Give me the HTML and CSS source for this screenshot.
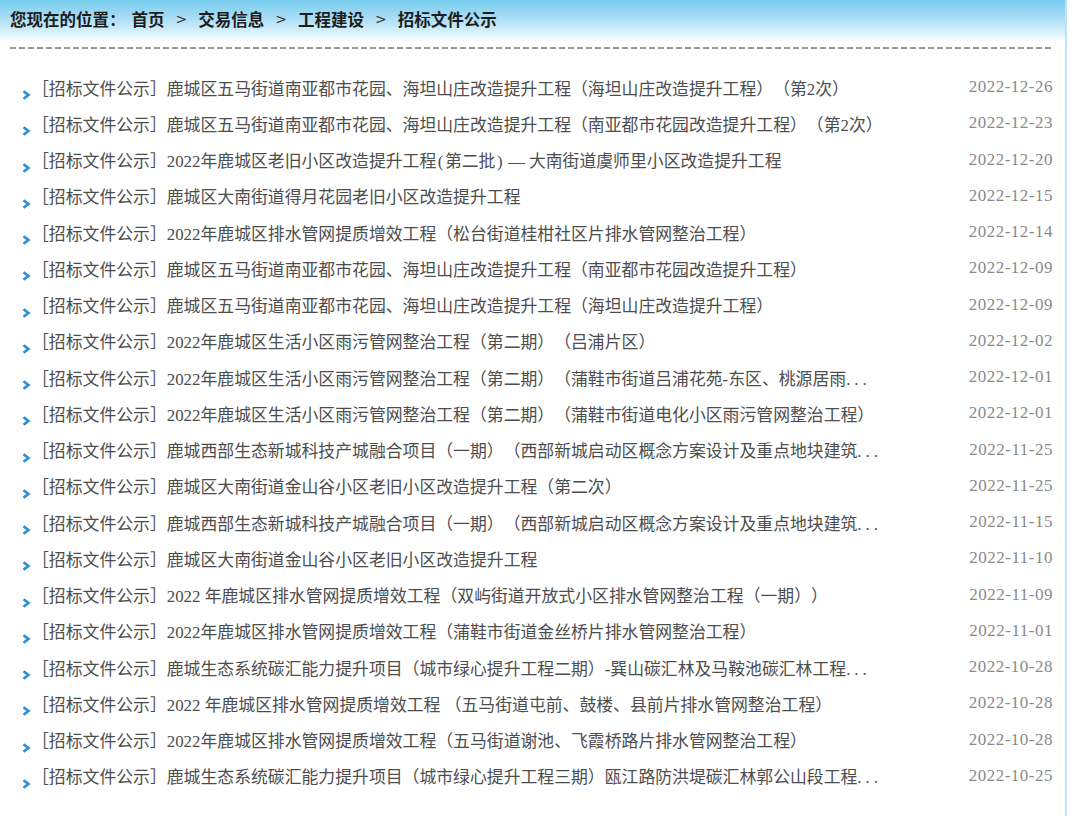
FILE: index.html
```html
<!DOCTYPE html>
<html lang="zh-CN">
<head>
<meta charset="utf-8">
<title>招标文件公示</title>
<link rel="stylesheet" href="styles.css">
</head>
<body>
<div class="page">
  <div class="wrap">
    <div class="crumb">
      <span class="lead">您现在的位置：</span><span>首页</span><span class="sep">&gt;</span><span>交易信息</span><span class="sep">&gt;</span><span>工程建设</span><span class="sep">&gt;</span><span>招标文件公示</span>
    </div>
    <div class="dash"></div>
    <ul class="list">
      <li><span class="title">［招标文件公示］鹿城区五马街道南亚都市花园、海坦山庄改造提升工程（海坦山庄改造提升工程）（第2次）</span><span class="date">2022-12-26</span></li>
      <li><span class="title">［招标文件公示］鹿城区五马街道南亚都市花园、海坦山庄改造提升工程（南亚都市花园改造提升工程）（第2次）</span><span class="date">2022-12-23</span></li>
      <li><span class="title">［招标文件公示］2022年鹿城区老旧小区改造提升工程<span class="hw">(</span>第二批<span class="hw">)</span><span class="dashc">—</span>大南街道虞师里小区改造提升工程</span><span class="date">2022-12-20</span></li>
      <li><span class="title">［招标文件公示］鹿城区大南街道得月花园老旧小区改造提升工程</span><span class="date">2022-12-15</span></li>
      <li><span class="title">［招标文件公示］2022年鹿城区排水管网提质增效工程（松台街道桂柑社区片排水管网整治工程）</span><span class="date">2022-12-14</span></li>
      <li><span class="title">［招标文件公示］鹿城区五马街道南亚都市花园、海坦山庄改造提升工程（南亚都市花园改造提升工程）</span><span class="date">2022-12-09</span></li>
      <li><span class="title">［招标文件公示］鹿城区五马街道南亚都市花园、海坦山庄改造提升工程（海坦山庄改造提升工程）</span><span class="date">2022-12-09</span></li>
      <li><span class="title">［招标文件公示］2022年鹿城区生活小区雨污管网整治工程（第二期）（吕浦片区）</span><span class="date">2022-12-02</span></li>
      <li><span class="title">［招标文件公示］2022年鹿城区生活小区雨污管网整治工程（第二期）（蒲鞋市街道吕浦花苑-东区、桃源居雨<span class="more">...</span></span><span class="date">2022-12-01</span></li>
      <li><span class="title">［招标文件公示］2022年鹿城区生活小区雨污管网整治工程（第二期）（蒲鞋市街道电化小区雨污管网整治工程）</span><span class="date">2022-12-01</span></li>
      <li><span class="title">［招标文件公示］鹿城西部生态新城科技产城融合项目（一期）（西部新城启动区概念方案设计及重点地块建筑<span class="more">...</span></span><span class="date">2022-11-25</span></li>
      <li><span class="title">［招标文件公示］鹿城区大南街道金山谷小区老旧小区改造提升工程（第二次）</span><span class="date">2022-11-25</span></li>
      <li><span class="title">［招标文件公示］鹿城西部生态新城科技产城融合项目（一期）（西部新城启动区概念方案设计及重点地块建筑<span class="more">...</span></span><span class="date">2022-11-15</span></li>
      <li><span class="title">［招标文件公示］鹿城区大南街道金山谷小区老旧小区改造提升工程</span><span class="date">2022-11-10</span></li>
      <li><span class="title">［招标文件公示］2022 年鹿城区排水管网提质增效工程（双屿街道开放式小区排水管网整治工程（一期））</span><span class="date">2022-11-09</span></li>
      <li><span class="title">［招标文件公示］2022年鹿城区排水管网提质增效工程（蒲鞋市街道金丝桥片排水管网整治工程）</span><span class="date">2022-11-01</span></li>
      <li><span class="title">［招标文件公示］鹿城生态系统碳汇能力提升项目（城市绿心提升工程二期）-巽山碳汇林及马鞍池碳汇林工程<span class="more">...</span></span><span class="date">2022-10-28</span></li>
      <li><span class="title">［招标文件公示］2022 年鹿城区排水管网提质增效工程 （五马街道屯前、鼓楼、县前片排水管网整治工程）</span><span class="date">2022-10-28</span></li>
      <li><span class="title">［招标文件公示］2022年鹿城区排水管网提质增效工程（五马街道谢池、飞霞桥路片排水管网整治工程）</span><span class="date">2022-10-28</span></li>
      <li><span class="title">［招标文件公示］鹿城生态系统碳汇能力提升项目（城市绿心提升工程三期）瓯江路防洪堤碳汇林郭公山段工程<span class="more">...</span></span><span class="date">2022-10-25</span></li>
    </ul>
  </div>
</div>
</body>
</html>
```

FILE: styles.css
```css
html, body {
  margin: 0;
  padding: 0;
  background: #fff;
}

.page {
  display: flex;
  height: 816px;
}

.wrap {
  width: 1065px;
  margin-right: 2px;
  border-right: 2px solid #bfe2f6;
  font-family: "Liberation Serif", "Noto Sans CJK SC", serif;
  text-spacing-trim: space-all;
}

.crumb {
  height: 42px;
  padding: 0 0 4px 10px;
  display: flex;
  align-items: center;
  box-sizing: border-box;
  background: linear-gradient(to bottom, #76ccee 0%, #a6dcf4 40%, #dcf2fc 80%, #ffffff 100%);
  font-family: "Noto Sans CJK SC", sans-serif;
  font-size: 16.5px;
  font-weight: bold;
  color: #1d1d1d;
}

.crumb .lead {
  margin-right: 6px;
}

.crumb .sep {
  font-weight: normal;
  font-family: "DejaVu Sans", sans-serif;
  font-size: 14px;
  color: #333;
  margin: 0 11px 0 11px;
}

.dash {
  margin: 5px 14px 0 10px;
  height: 2px;
  background: repeating-linear-gradient(to right, #9a9a9a 0, #9a9a9a 6px, transparent 6px, transparent 9px);
}

.list {
  list-style: none;
  margin: 20px 0 0 0;
  padding: 0;
}

.list li {
  height: 36.26px;
  display: flex;
  align-items: center;
  justify-content: space-between;
  padding: 0 12px 0 32px;
  background-image: url("data:image/svg+xml,%3Csvg xmlns='http://www.w3.org/2000/svg' width='10' height='10' viewBox='0 0 10 10'%3E%3Cpath d='M2.5 1.2 L7.4 5 L2.5 8.8' fill='none' stroke='%232a8fd5' stroke-width='2.7' stroke-linejoin='miter'/%3E%3C/svg%3E");
  background-repeat: no-repeat;
  background-position: 21px 21px;
}

.title {
  font-size: 16.85px;
  color: #4d4d4d;
  white-space: nowrap;
}

.title .more {
  letter-spacing: 4px;
}

.title .hw {
  padding: 0 1.5px;
}

.title .dashc {
  padding: 0 4px;
}

.date {
  font-family: "Liberation Serif", serif;
  font-size: 17px;
  letter-spacing: 0.5px;
  color: #8a8a8a;
}
```
